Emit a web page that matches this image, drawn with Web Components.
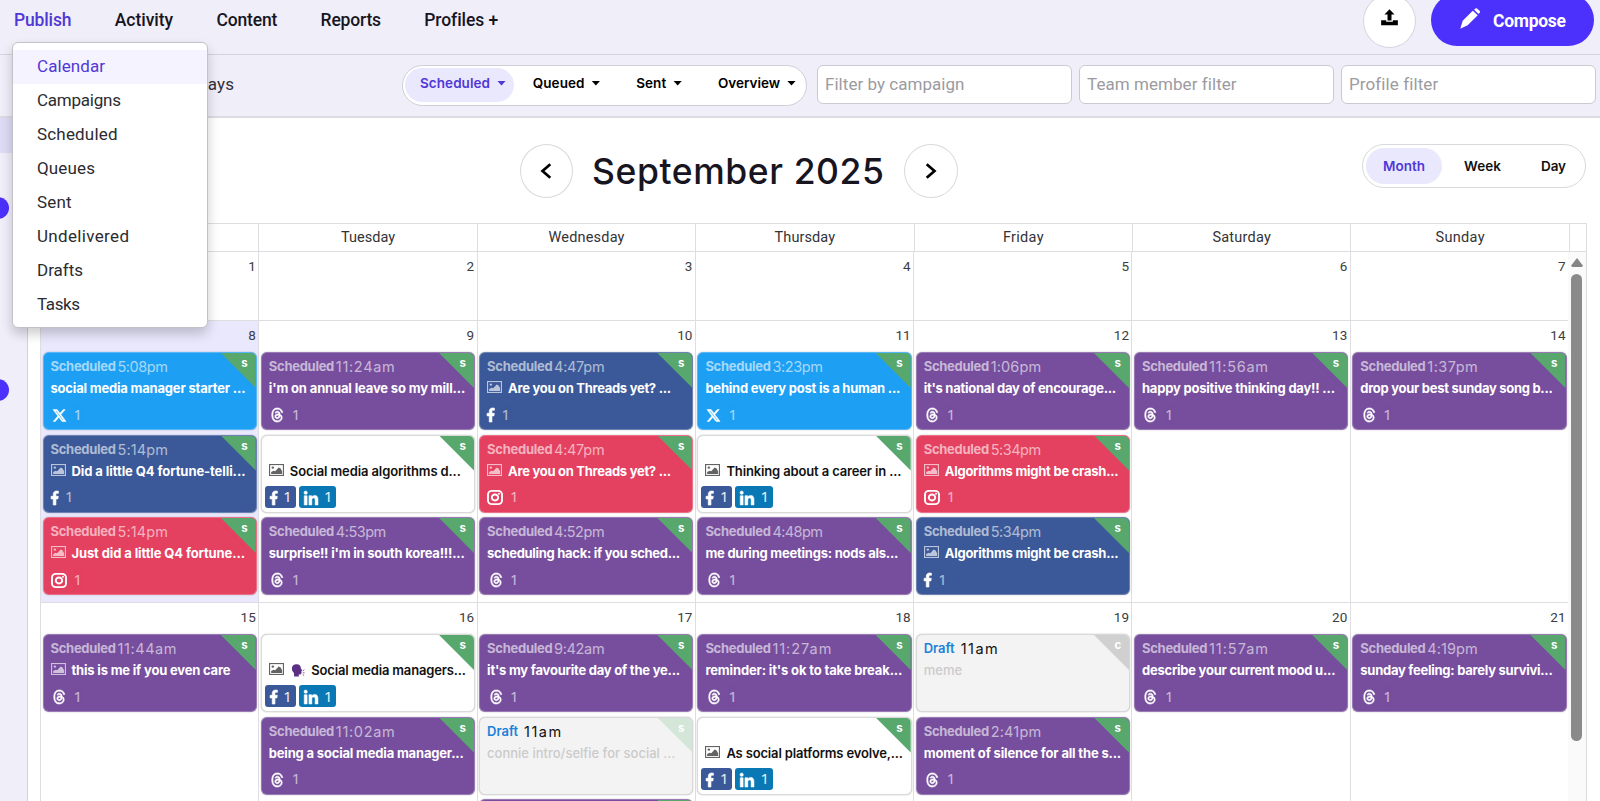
<!DOCTYPE html>
<html lang="en">
<head>
<meta charset="utf-8">
<title>Calendar</title>
<style>
    html, body {
        margin: 0;
        height: 100%;
        overflow: hidden;
    }
    body {
        font-family: Roboto, "Noto Sans", sans-serif;
        color: #17151f;
        background: #fff;
        --accent: #4b31fb;
        --accent-text: #5038d6;
        --accent-soft: #eae8fd;
        --bar: #f0eef9;
        --line: #dedee2;
    }
</style>
</head>
<body>
<planner-app></planner-app>

<script>
const ICONS = {
    threads: ['0 0 16 16', '<path stroke="currentColor" stroke-width=".8" d="M6.321 6.016c-.27-.18-1.166-.802-1.166-.802.756-1.081 1.753-1.502 3.132-1.502.975 0 1.803.327 2.394.948s.928 1.509 1.005 2.644q.492.207.905.484c1.109.745 1.719 1.86 1.719 3.137 0 2.716-2.226 5.075-6.256 5.075C4.594 16 1 13.987 1 7.994 1 2.034 4.482 0 8.044 0 9.69 0 13.55.243 15 5.036l-1.36.353C12.516 1.974 10.163 1.43 8.006 1.43c-3.565 0-5.582 2.171-5.582 6.79 0 4.143 2.254 6.343 5.63 6.343 2.777 0 4.847-1.443 4.847-3.556 0-1.438-1.208-2.127-1.27-2.127-.236 1.234-.868 3.31-3.644 3.31-1.618 0-3.013-1.118-3.013-2.582 0-2.09 1.984-2.847 3.55-2.847.586 0 1.294.04 1.663.114 0-.637-.54-1.728-1.9-1.728-1.25 0-1.566.405-1.967.868ZM8.716 8.19c-2.04 0-2.304.87-2.304 1.416 0 .878 1.043 1.168 1.6 1.168 1.02 0 2.067-.282 2.232-2.423a6.2 6.2 0 0 0-1.528-.161"/>'],
    x: ['0 0 16 16', '<path stroke="currentColor" stroke-width=".7" d="M12.6.75h2.454l-5.36 6.142L16 15.25h-4.937l-3.867-5.07-4.425 5.07H.316l5.733-6.57L0 .75h5.063l3.495 4.633L12.601.75Zm-.86 13.028h1.36L4.323 2.145H2.865z"/>'],
    facebook: ['20 0 280 512', '<path stroke="currentColor" stroke-width="24" d="M279.14 288l14.22-92.66h-88.91v-60.13c0-25.35 12.42-50.06 52.24-50.06h40.42V6.26S260.43 0 225.36 0c-73.22 0-121.08 44.38-121.08 124.72v70.62H22.89V288h81.39v224h100.17V288z"/>'],
    linkedin: ['0 0 448 448', '<path stroke="currentColor" stroke-width="16" d="M100.28 448H7.4V148.9h92.88zM53.79 108.1C24.09 108.1 0 83.5 0 53.8a53.79 53.79 0 0 1 107.58 0c0 29.7-24.1 54.3-53.79 54.3zM447.9 448h-92.68V302.4c0-34.7-.7-79.2-48.29-79.2-48.29 0-55.69 37.7-55.69 76.7V448h-92.78V148.9h89.08v40.8h1.3c12.4-23.5 42.69-48.3 87.88-48.3 94 0 111.28 61.9 111.28 142.3V448z"/>'],
    instagram: ['0 0 16 16', '<g fill="none" stroke="currentColor" stroke-width="1.9"><rect x="1" y="1" width="14" height="14" rx="3.8"/><circle cx="8" cy="8" r="3.2"/></g><circle cx="12" cy="4" r="1"/>'],
    image: ['0 0 16 13', '<rect x=".6" y=".6" width="14.8" height="11.8" fill="none" stroke="currentColor" stroke-width="1.2"/><circle cx="4.1" cy="3.9" r="1.3"/><path d="M2.3 10.8V8.6l2.6-1.4 1.7.7 3.7-4.2 1.9.9 1.8 3.2v3z"/>'],
    upload: ['0 0 20 20', '<path d="M10 1.2l5.3 5.6h-3.2v6.4H7.9V6.8H4.7z"/><path d="M1.2 13h5.3v1.6h7V13h5.3v5.2H1.2z"/>'],
    pencil: ['0 0 22 22', '<path d="M.3 21.8l2.5-8.4L13.4 2.9l5.2 4.7L8 18.1z"/><path d="M14.7 1.9L16.2.5q.8-.6 1.7.1l2.8 2.5q.8.8.1 1.6l-1.3 1.7z"/>'],
    left: ['0 0 12 16', '<path d="M10.3 1.2L2.5 8l7.8 6.8" fill="none" stroke="currentColor" stroke-width="2.7"/>'],
    right: ['0 0 12 16', '<path d="M1.7 1.2L9.5 8l-7.8 6.8" fill="none" stroke="currentColor" stroke-width="2.7"/>'],
    speaking: ['0 0 16 15', '<path fill="#5b2f83" d="M1 5.2C1 2 3.6.2 6.5.4c3.4 0 4.8 2.1 4.7 4.4l1.5 2.5-.9.7.3 1.6-.6 2.2-2.7.3.2 2.3H3.6l-.2-4.1C1.9 9 1 7.2 1 5.2z"/><path d="M13.3 8.4l1.8-2M13.5 10.2h2M13.3 12l1.7 1.5" fill="none" stroke="#6d4694"/>'],
};

const COLORS = {
    x: '#1d9ff3',
    facebook: '#3b5998',
    instagram: '#e44060',
    threads: '#774e9d',
    linkedin: '#0a78b5',
};

// [network, time, title, title width, extras]
const WEEKS = [
    { height: 69, days: [1, 2, 3, 4, 5, 6, 7].map(n => [n, []]) },
    {
        height: 282,
        days: [
            [8, [
                ['x', '5:08pm', 'social media manager starter ...', 195],
                ['facebook', '5:14pm', 'Did a little Q4 fortune-telli...', 174, 'image'],
                ['instagram', '5:14pm', 'Just did a little Q4 fortune...', 173.5, 'image'],
            ]],
            [9, [
                ['threads', '11:24am', 'i\'m on annual leave so my mill...', 196.5],
                ['multi', '', 'Social media algorithms d...', 171, 'image'],
                ['threads', '4:53pm', 'surprise!! i\'m in south korea!!!...', 196],
            ]],
            [10, [
                ['facebook', '4:47pm', 'Are you on Threads yet? ...', 163, 'image'],
                ['instagram', '4:47pm', 'Are you on Threads yet? ...', 163, 'image'],
                ['threads', '4:52pm', 'scheduling hack: if you sched...', 193],
            ]],
            [11, [
                ['x', '3:23pm', 'behind every post is a human ...', 195],
                ['multi', '', 'Thinking about a career in ...', 175, 'image'],
                ['threads', '4:48pm', 'me during meetings: nods als...', 193],
            ]],
            [12, [
                ['threads', '1:06pm', 'it\'s national day of encourage...', 192.5],
                ['instagram', '5:34pm', 'Algorithms might be crash...', 174, 'image'],
                ['facebook', '5:34pm', 'Algorithms might be crash...', 174, 'image'],
            ]],
            [13, [['threads', '11:56am', 'happy positive thinking day!! ...', 193]]],
            [14, [['threads', '1:37pm', 'drop your best sunday song b...', 192.5]]],
        ],
    },
    {
        height: 282,
        days: [
            [15, [['threads', '11:44am', 'this is me if you even care', 159, 'image']]],
            [16, [
                ['multi', '', 'Social media managers...', 154.5, 'image speaking'],
                ['threads', '11:02am', 'being a social media manager...', 195],
            ]],
            [17, [
                ['threads', '9:42am', 'it\'s my favourite day of the ye...', 193],
                ['draft', '11am', 'connie intro/selfie for social ...', 188],
                ['threads', '', '', 0],
            ]],
            [18, [
                ['threads', '11:27am', 'reminder: it\'s ok to take break...', 197],
                ['multi', '', 'As social platforms evolve,...', 176.5, 'image'],
            ]],
            [19, [
                ['draft', '11am', 'meme', 38.5, 'concept'],
                ['threads', '2:41pm', 'moment of silence for all the s...', 197.5],
            ]],
            [20, [['threads', '11:57am', 'describe your current mood u...', 193.5]]],
            [21, [['threads', '4:19pm', 'sunday feeling: barely survivi...', 192.5]]],
        ],
    },
];

// base class: clones the class template into an open shadow root
class BaseElement extends HTMLElement {
    connectedCallback() {
        if (this.shadowRoot) {
            return;
        }
        const dom = document.createElement('template');
        dom.innerHTML = this.template();
        this.attachShadow({ mode: 'open' }).appendChild(dom.content.cloneNode(true));
        this.rendered();
    }

    rendered() {}
}

class UiIcon extends BaseElement {
    template() {
        const [viewBox, body] = ICONS[this.getAttribute('name')];
        return `
            <style>
                :host { display: inline-block; flex: none; width: 14px; height: 14px; }
                svg { display: block; width: 100%; height: 100%; overflow: visible; }
            </style>
            <svg viewBox="${viewBox}" fill="currentColor" preserveAspectRatio="none" aria-hidden="true">${body}</svg>
        `;
    }
}

// one line of text, tracked so that it takes exactly the given width
class FitText extends BaseElement {
    template() {
        return `
            <style>
                :host { display: inline-block; flex: none; white-space: nowrap; }
                span { display: inline-block; }
            </style>
            <span><slot></slot></span>
        `;
    }

    rendered() {
        const width = +this.getAttribute('width');
        const span = this.shadowRoot.querySelector('span');
        const gaps = Math.max(1, this.textContent.length - 1);
        const natural = span.getBoundingClientRect().width;
        this.style.width = `${width}px`;
        span.style.letterSpacing = `${(width - natural) / gaps}px`;
    }
}

class TopNav extends BaseElement {
    template() {
        return `
            <style>
                :host {
                    display: flex;
                    justify-content: space-between;
                    height: 55px;
                    box-sizing: border-box;
                    padding: 0 6px 0 14px;
                    background: var(--bar);
                    border-bottom: 1px solid #d5d3e1;
                }
                nav { display: flex; gap: 43.2px; font-size: 17.5px; font-weight: 500; line-height: 40px; }
                .on { color: var(--accent-text); }
                .actions { display: flex; gap: 15px; margin-top: -6px; }
                .upload {
                    display: grid;
                    place-items: center;
                    width: 51px;
                    height: 52px;
                    border: 1px solid #d6d4de;
                    border-radius: 50%;
                    background: #fff;
                    color: #000;
                }
                .upload ui-icon { width: 19px; height: 19px; margin-top: -7px; }
                .compose {
                    display: flex;
                    box-sizing: border-box;
                    width: 163px;
                    height: 52px;
                    padding-left: 29px;
                    border-radius: 26px;
                    background: var(--accent);
                    color: #fff;
                    font-size: 17.5px;
                    font-weight: 700;
                    line-height: 54px;
                }
                .compose ui-icon { width: 21px; height: 21px; margin: 14px 12px 0 0; }
            </style>
            <nav>
                <fit-text class="on" width="57.5">Publish</fit-text>
                <fit-text width="58.5">Activity</fit-text>
                <fit-text width="61">Content</fit-text>
                <fit-text width="60.5">Reports</fit-text>
                <fit-text width="73.5">Profiles +</fit-text>
            </nav>
            <div class="actions">
                <div class="upload"><ui-icon name="upload"></ui-icon></div>
                <div class="compose"><ui-icon name="pencil"></ui-icon><fit-text width="73">Compose</fit-text></div>
            </div>
        `;
    }
}

class PublishMenu extends BaseElement {
    template() {
        const items = [
            ['Calendar', 68], ['Campaigns', 84], ['Scheduled', 80.5], ['Queues', 58],
            ['Sent', 34.5], ['Undelivered', 92], ['Drafts', 46], ['Tasks', 43],
        ];
        return `
            <style>
                :host {
                    position: absolute;
                    z-index: 2;
                    left: 12px;
                    top: 42px;
                    box-sizing: border-box;
                    width: 196px;
                    height: 286px;
                    padding-top: 7px;
                    background: #fff;
                    border: 1px solid #c3c2c9;
                    border-radius: 6px;
                    box-shadow: 0 6px 12px rgba(0, 0, 0, .2);
                    font-size: 17px;
                    color: #2c2b31;
                }
                div { height: 34px; padding-left: 24px; line-height: 33px; }
                .on { color: var(--accent-text); background: #f5f3ff; }
            </style>
            ${items.map(([name, w], i) => `<div class="${i ? '' : 'on'}"><fit-text width="${w}">${name}</fit-text></div>`).join('')}
        `;
    }
}

class FilterBar extends BaseElement {
    template() {
        const tabs = [['Scheduled', 70, 28], ['Queued', 51.5, 36], ['Sent', 30, 36], ['Overview', 62, 0]];
        const fields = [['Filter by campaign', 139.5], ['Team member filter', 149], ['Profile filter', 88]];
        return `
            <style>
                :host {
                    display: flex;
                    box-sizing: border-box;
                    height: 63px;
                    padding: 10px 0 0 198px;
                    background: var(--bar);
                    border-bottom: 2px solid #dcdbe2;
                    font-size: 17px;
                }
                .range { flex: none; width: 204px; line-height: 38px; color: #302f38; }
                .tabs {
                    display: flex;
                    flex: none;
                    box-sizing: border-box;
                    width: 405px;
                    height: 41px;
                    margin-right: 10px;
                    padding: 2px 10px 3px 2px;
                    background: #fff;
                    border: 1px solid #cfced5;
                    border-radius: 21px;
                    font-family: Inter, Roboto, sans-serif;
                    font-size: 13.5px;
                    font-weight: 600;
                    line-height: 30px;
                    color: #000;
                }
                .tab { display: flex; flex: none; align-items: center; gap: 7px; height: 30px; }
                .tab i {
                    width: 9px;
                    height: 5px;
                    background: currentColor;
                    clip-path: polygon(0 0, 100% 0, 50% 100%);
                }
                .tab.on {
                    height: 34px;
                    box-sizing: border-box;
                    padding: 0 8px 4px 15px;
                    margin-right: -9px;
                    border-radius: 17px;
                    background: var(--accent-soft);
                    color: var(--accent-text);
                }
                .field {
                    flex: none;
                    box-sizing: border-box;
                    width: 255px;
                    height: 39px;
                    margin-right: 7px;
                    padding-left: 7px;
                    background: #fff;
                    border: 1px solid #cbcad2;
                    border-radius: 6px;
                    line-height: 37px;
                    color: #9b9ba0;
                }
            </style>
            <div class="range"><fit-text width="36">days</fit-text></div>
            <div class="tabs">
                ${tabs.map(([name, w, gap], i) => `
                    <div class="tab ${i ? '' : 'on'}"><fit-text width="${w}">${name}</fit-text><i></i></div>
                    <b style="width:${gap}px"></b>
                `).join('')}
            </div>
            ${fields.map(([name, w]) => `<div class="field"><fit-text width="${w}">${name}</fit-text></div>`).join('')}
        `;
    }
}

class SideRail extends BaseElement {
    template() {
        return `
            <style>
                :host { display: block; flex: none; box-sizing: border-box; width: 28px; background: var(--bar); border-right: 1px solid #d3d1dd; overflow: hidden; }
                .current { height: 35px; background: #dedbf6; }
                .badge { width: 22px; height: 22px; margin-left: -13.5px; border-radius: 50%; background: var(--accent); }
                .badge:nth-of-type(2) { margin-top: 44px; }
                .badge:nth-of-type(3) { margin-top: 160px; }
            </style>
            <div class="current"></div>
            <div class="badge"></div>
            <div class="badge"></div>
        `;
    }
}

class MonthHeader extends BaseElement {
    template() {
        return `
            <style>
                :host { display: flex; height: 105px; box-sizing: border-box; padding: 26px 14px 0 491.5px; }
                .round {
                    display: grid;
                    flex: none;
                    place-items: center;
                    box-sizing: border-box;
                    width: 53.5px;
                    height: 54px;
                    border: 1px solid #d9d9dd;
                    border-radius: 50%;
                    color: #000;
                }
                .round ui-icon { width: 12px; height: 16px; margin-top: -1px; }
                .title { padding: 0 20px 0 19px; font: 500 35.5px/56px Inter, Roboto, sans-serif; }
                .views {
                    display: flex;
                    box-sizing: border-box;
                    width: 224px;
                    height: 44px;
                    margin-left: auto;
                    padding: 3px;
                    border: 1px solid #d9d9dd;
                    border-radius: 22px;
                    font-family: Inter, Roboto, sans-serif;
                    font-size: 13.5px;
                    font-weight: 600;
                    line-height: 37px;
                    color: #111;
                }
                .views fit-text { margin-right: 40px; }
                .on { height: 36px; margin-right: 22px; padding: 0 17px; border-radius: 18px; background: var(--accent-soft); color: var(--accent-text); }
                .views .on fit-text { margin: 0; }
            </style>
            <div class="round"><ui-icon name="left"></ui-icon></div>
            <div class="title"><fit-text width="292">September 2025</fit-text></div>
            <div class="round"><ui-icon name="right"></ui-icon></div>
            <div class="views">
                <div class="on"><fit-text width="42">Month</fit-text></div>
                <fit-text width="37">Week</fit-text>
                <fit-text width="25">Day</fit-text>
            </div>
        `;
    }
}

class PostCard extends BaseElement {
    template() {
        const [network, time, title, width, extra = ''] = this.post;
        const draft = network === 'draft';
        const multi = network === 'multi';
        const icons = extra.split(' ').filter(name => ICONS[name]);
        const networks = multi ? ['facebook', 'linkedin'] : [network];
        const timeWidth = { 4: 37, 6: 50.5, 7: 59 }[time.length];
        return `
            <style>
                :host {
                    position: relative;
                    display: block;
                    box-sizing: border-box;
                    height: 78px;
                    margin-bottom: 4.5px;
                    padding: 4px 0 0 7px;
                    overflow: hidden;
                    border: 1px solid rgba(255, 255, 255, .25);
                    border-radius: 6px;
                    background: ${COLORS[network] || '#fff'};
                    box-shadow: 0 0 1.5px rgba(0, 0, 0, .3);
                    color: #fff;
                    font-family: Inter, Roboto, sans-serif;
                    font-size: 13px;
                }
                :host(.multi) { color: #111; border-color: #dadada; }
                :host(.draft) { color: #cbcbcb; border-color: #d8d8d8; background: #f3f3f3; }
                .corner {
                    position: absolute;
                    top: 0;
                    right: 0;
                    width: 35px;
                    height: 35px;
                    clip-path: polygon(0 0, 100% 0, 100% 100%);
                    background: #58a86e;
                    color: #fff;
                    font-size: 11.5px;
                    font-weight: 700;
                    line-height: 20px;
                    text-indent: 20.5px;
                }
                :host(.draft) .corner { background: ${extra ? '#d0d0d0' : '#d3e6d8'}; }
                .when { display: flex; gap: 1.5px; height: 20px; line-height: 18px; color: rgba(255, 255, 255, .6); }
                .when b { font-weight: 700; }
                .when .time { font-size: 14.5px; line-height: 19px; }
                :host(.draft) .when { gap: 6px; color: #111; }
                :host(.draft) .when b { color: #1b82da; font-weight: 600; }
                .title { display: flex; height: 22px; line-height: 22px; font-weight: 700; }
                :host(.multi) .title { font-weight: 600; }
                :host(.draft) .title { font-weight: 500; }
                .title ui-icon { width: 15px; height: 12px; margin: 4px 6px 0 0; opacity: .65; }
                .title ui-icon[name=speaking] { width: 14px; height: 13px; margin: 5px 6px 0 1.5px; opacity: 1; }
                .networks { display: flex; align-items: center; gap: 7px; height: 22px; margin-top: 5px; }
                .networks ui-icon[name=threads] { margin: 0 1px 0 2.5px; width: 12.5px; }
                .networks ui-icon[name=x] { width: 13px; height: 13px; margin: 0 1px 0 2px; }
                .networks ui-icon[name=facebook] { width: 7.5px; }
                .networks ui-icon[name=instagram] { width: 16px; height: 15px; }
                .count { opacity: .6; font: 15px/22px "Noto Sans", sans-serif; margin-top: -3px; }
                :host(.multi) .networks { gap: 3px; margin: 4px 0 0 -4px; }
                .chip { display: flex; align-items: center; box-sizing: border-box; height: 22px; padding: 2px 4px 0 5px; gap: 6px; border-radius: 3px; color: #fff; }
                .chip .count { opacity: .9; }
            </style>
            <div class="when">
                ${multi || !time ? '' : `
                    <b><fit-text width="${draft ? 31 : 65.5}">${draft ? 'Draft' : 'Scheduled'}</fit-text></b>
                    <fit-text class="time" width="${timeWidth}">${time}</fit-text>
                `}
            </div>
            <div class="title">
                ${icons.map(name => `<ui-icon name="${name}"></ui-icon>`).join('')}
                ${title && `<fit-text width="${width}">${title}</fit-text>`}
            </div>
            <div class="networks">
                ${draft || !title ? '' : networks.map(name => `
                    ${multi ? `<div class="chip" style="background:${COLORS[name]}">` : ''}
                    <ui-icon name="${name}"></ui-icon><span class="count">1</span>
                    ${multi ? '</div>' : ''}
                `).join('')}
            </div>
            <div class="corner">${title ? (extra === 'concept' ? 'c' : 's') : ''}</div>
        `;
    }
}

class DayCell extends BaseElement {
    template() {
        return `
            <style>
                :host {
                    display: block;
                    box-sizing: border-box;
                    min-width: 0;
                    padding: 0 1.5px 0 1.5px;
                    border-left: 1px solid var(--line);
                    border-bottom: 1px solid var(--line);
                }
                :host([today]) { background: #eae8fd; }
                .number { height: 31px; padding-right: 1px; line-height: 28px; font-size: 13.5px; text-align: right; color: #3c3c41; }
            </style>
            <div class="number">${this.day}</div>
        `;
    }

    rendered() {
        this.posts.forEach((post) => {
            const card = document.createElement('post-card');
            card.post = post;
            if (post[0] === 'multi' || post[0] === 'draft') {
                card.className = post[0];
            }
            this.shadowRoot.appendChild(card);
        });
    }
}

class MonthGrid extends BaseElement {
    template() {
        // the open menu lies over the first name
        const names = [['', 0], ['Tuesday', 54], ['Wednesday', 76], ['Thursday', 60.5], ['Friday', 40.5], ['Saturday', 58.5], ['Sunday', 49]];
        return `
            <style>
                :host {
                    display: block;
                    width: 1547px;
                    box-sizing: border-box;
                    margin-left: 12px;
                    border: 1px solid var(--line);
                    border-left: 0;
                    border-bottom: 0;
                }
                .names { display: grid; grid-template-columns: repeat(7, 218.4px) 1fr; height: 28px; box-sizing: border-box; border-bottom: 1px solid var(--line); }
                .names div { border-left: 1px solid var(--line); text-align: center; font-size: 14.5px; line-height: 27px; color: #333338; }
                .body { display: flex; height: 560px; overflow: hidden; }
                .weeks { flex: none; width: 1528px; }
                .week { display: grid; grid-template-columns: repeat(6, 218.3px) 1fr; }
                .scroll { flex: 1; background: #fafafa; padding: 6px 0 0 3px; }
                .arrow { width: 12px; height: 9px; background: #858585; clip-path: polygon(50% 0, 100% 85%, 90% 100%, 10% 100%, 0 85%); }
                .thumb { width: 11px; height: 467px; margin-top: 7px; border-radius: 6px; background: #8a8a8a; }
            </style>
            <div class="names">
                ${names.map(([name, w]) => `<div>${name && `<fit-text width="${w}">${name}</fit-text>`}</div>`).join('')}
                <div></div>
            </div>
            <div class="body">
                <div class="weeks"></div>
                <div class="scroll"><div class="arrow"></div><div class="thumb"></div></div>
            </div>
        `;
    }

    rendered() {
        const weeks = this.shadowRoot.querySelector('.weeks');
        WEEKS.forEach(({ height, days }) => {
            const row = document.createElement('div');
            row.className = 'week';
            row.style.height = `${height}px`;
            days.forEach(([day, posts]) => {
                const cell = document.createElement('day-cell');
                cell.day = day;
                cell.posts = posts;
                cell.toggleAttribute('today', day === 8);
                row.appendChild(cell);
            });
            weeks.appendChild(row);
        });
    }
}

class PlannerApp extends BaseElement {
    template() {
        return `
            <style>
                :host { display: flex; flex-direction: column; position: relative; width: 1600px; height: 801px; overflow: hidden; }
                .main { display: flex; flex: 1; min-height: 0; }
                .page { flex: 1; min-width: 0; }
            </style>
            <top-nav></top-nav>
            <filter-bar></filter-bar>
            <div class="main">
                <side-rail></side-rail>
                <div class="page">
                    <month-header></month-header>
                    <month-grid></month-grid>
                </div>
            </div>
            <publish-menu></publish-menu>
        `;
    }
}

customElements.define('ui-icon', UiIcon);
customElements.define('fit-text', FitText);
customElements.define('top-nav', TopNav);
customElements.define('publish-menu', PublishMenu);
customElements.define('filter-bar', FilterBar);
customElements.define('side-rail', SideRail);
customElements.define('month-header', MonthHeader);
customElements.define('post-card', PostCard);
customElements.define('day-cell', DayCell);
customElements.define('month-grid', MonthGrid);
customElements.define('planner-app', PlannerApp);
</script>
</body>
</html>
